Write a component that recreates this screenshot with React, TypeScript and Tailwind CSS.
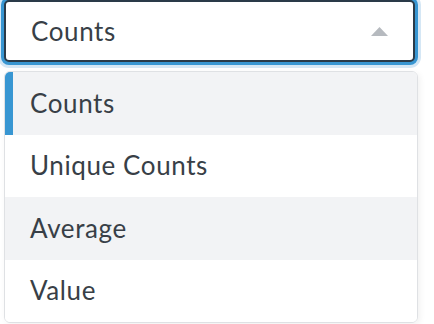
import { useState } from "react";

const options = ["Counts", "Unique Counts", "Average", "Value"];

const App = () => {
  const [selected, setSelected] = useState("Counts");
  const [hovered] = useState("Average");

  return (
    <div
      className="w-[434px] h-[324px] bg-white overflow-hidden relative"
      style={{ fontFamily: "Lato, 'Open Sans', sans-serif" }}
    >
      <div className="pl-[4px] pr-[19px]">
        <button
          className="w-[411px] h-[62px] flex items-center justify-between pl-[25px] pr-[25px] bg-white border-2 border-[#2a3a48] rounded-[5px] shadow-[0_0_0_3px_#3896d2,0_0_0_6px_#d5e7f5] text-[26px] tracking-[0.6px] text-[#383f47]"
        >
          <span>{selected}</span>
          <svg width="17" height="9" viewBox="0 0 17 9">
            <polygon points="8.5,0 17,9 0,9" fill="#b6babf" />
          </svg>
        </button>
        <ul className="mt-[9px] w-[414px] border border-[#dfe1e4] rounded-[6px] overflow-hidden shadow-[2px_2px_6px_rgba(0,0,0,0.06)]">
          {options.map((o) => {
            const active = o === selected;
            const hover = o === hovered;
            return (
              <li
                key={o}
                onClick={() => setSelected(o)}
                className={`relative h-[62.5px] flex items-center pl-[25px] text-[26px] tracking-[0.6px] text-[#383f47] cursor-pointer ${
                  active || hover ? "bg-[#f2f3f5]" : "bg-white"
                }`}
              >
                {active && (
                  <span className="absolute left-0 top-0 bottom-0 w-[8px] bg-[#3896d2]" />
                )}
                {o}
              </li>
            );
          })}
        </ul>
      </div>
    </div>
  );
};

export default App;
